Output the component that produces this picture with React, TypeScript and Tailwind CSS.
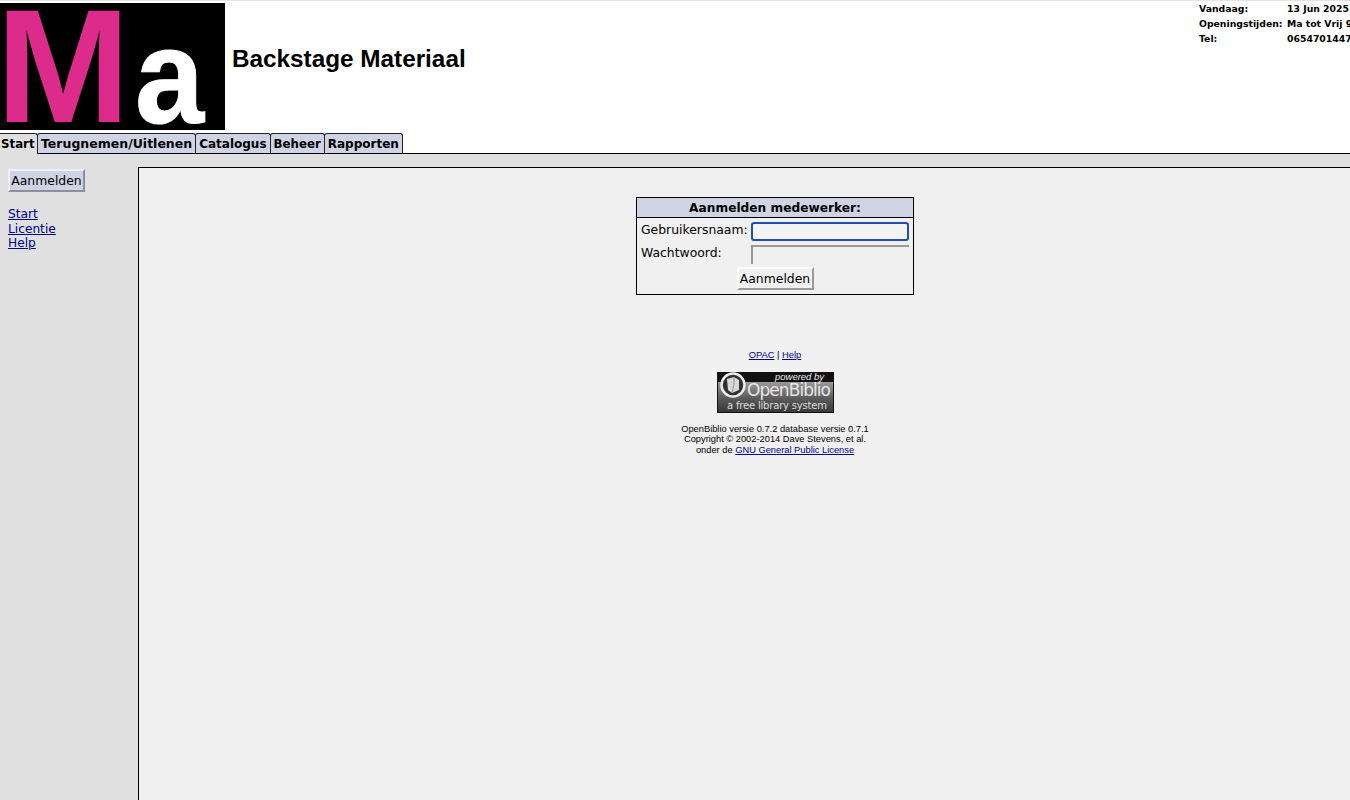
const sans = "font-['DejaVu_Sans',sans-serif]"

const tabs = [
  { name: 'Terugnemen/Uitlenen', size: 'text-[12.5px]' },
  { name: 'Catalogus', size: 'text-[12px]' },
  { name: 'Beheer', size: 'text-[11.8px]' },
  { name: 'Rapporten', size: 'text-[12px]' },
]

function Logo() {
  return (
    <div className="flex h-[127px] w-[225px] shrink-0 overflow-hidden bg-black font-['Liberation_Sans',sans-serif] font-bold">
      <span className="ml-[-4px] mt-[-14px] h-[155px] text-[161px] leading-[155px] text-[#dc2b8b]">M</span>
      <span className="ml-[5px] mt-[-4px] h-[155px] origin-left scale-x-[0.92] text-[135px] leading-[155px] text-white [-webkit-text-stroke:1px_white]">a</span>
    </div>
  )
}

function Badge() {
  return (
    <svg width="117" height="41" viewBox="0 0 117 41" className="block">
      <defs>
        <linearGradient id="band" x1="0" y1="0" x2="0" y2="1">
          <stop offset="0" stopColor="#9a9a9a" />
          <stop offset="0.55" stopColor="#5a5a5a" />
          <stop offset="1" stopColor="#3a3a3a" />
        </linearGradient>
      </defs>
      <rect width="117" height="41" fill="#111" />
      <rect x="1" y="10" width="115" height="30" fill="url(#band)" />
      <circle cx="16" cy="13" r="11.5" fill="#333" stroke="#ececec" strokeWidth="2.5" />
      <path d="M10 7 L17 5 L22 8 L22 18 L15 21 L11 18 Z" fill="#d8d8d8" />
      <path d="M17 5 L17 12 L15 21" fill="none" stroke="#777" strokeWidth="0.7" />
      <text x="58" y="8" fontSize="9.5" fontStyle="italic" fontFamily="Liberation Sans" fill="#eee" textLength="49">powered by</text>
      <text x="30" y="24" fontSize="17" fontFamily="DejaVu Sans" fill="#e6e6e6" textLength="84">OpenBiblio</text>
      <text x="10" y="37" fontSize="10" fontFamily="DejaVu Sans" fill="#ddd" textLength="100">a free library system</text>
    </svg>
  )
}

export default function App() {
  return (
    <div className="h-[800px] w-[1350px] overflow-hidden bg-white">
      {/* the page is wider than the window, so the right side is clipped */}
      <div className={`flex h-[800px] w-[1411px] flex-col text-black ${sans}`}>
        {/* header */}
        <div className="flex h-[133px] border-t border-[#e4e4e4] pt-[2px]">
          <Logo />
          <h1 className="ml-[7px] mt-[41px] font-['Liberation_Sans',sans-serif] text-[24.3px] font-bold leading-[30px]">Backstage Materiaal</h1>
          <table className="ml-auto mt-[-2px] h-fit w-[212px] shrink-0 border-collapse text-[9.3px] font-bold leading-[15px]">
            <tbody>
              <tr><td className="w-[88px] whitespace-nowrap">Vandaag:</td><td className="whitespace-nowrap">13 Jun 2025</td></tr>
              <tr><td className="whitespace-nowrap">Openingstijden:</td><td className="whitespace-nowrap">Ma tot Vrij 9</td></tr>
              <tr><td className="whitespace-nowrap">Tel:</td><td className="whitespace-nowrap">0654701447</td></tr>
            </tbody>
          </table>
        </div>

        {/* tabs */}
        <div className="flex h-[21px] items-stretch border-b border-black font-bold leading-[20px]">
          <div className="mb-[-1px] w-[38px] whitespace-nowrap rounded-tr-[3px] border-r border-t border-[#222] bg-[#e0e0e0] pb-[1px] pl-[1px] text-[11.8px]">Start</div>
          {tabs.map((t) => (
            <div key={t.name} className={`ml-[-1px] whitespace-nowrap rounded-t-[3px] border border-b-0 border-[#222] bg-[#cfd3e4] px-[3px] ${t.size}`}>{t.name}</div>
          ))}
        </div>

        {/* body */}
        <div className="flex flex-1 bg-[#e0e0e0]">
          <div className="w-[138px] shrink-0 pl-[8px] pt-[15px] text-[12.2px]">
            <button className="h-[23px] w-[77px] border-2 border-b-[#8e8e9e] border-l-[#eef0f6] border-r-[#8e8e9e] border-t-[#eef0f6] bg-[#cfd3e4] text-[12.4px] leading-[18px]">Aanmelden</button>
            <div className="mt-[15px] flex flex-col items-start leading-[14.6px] text-[#00008b]">
              <a className="underline">Start</a>
              <a className="underline">Licentie</a>
              <a className="underline">Help</a>
            </div>
          </div>

          <div className="mt-[13px] flex flex-1 flex-col items-center border-l border-t border-black bg-[#f0f0f0] pt-[29px]">
            <div className="w-[278px] border border-black text-[12.4px]">
              <div className="h-[20px] border-b border-black bg-[#cfd3e4] text-center text-[12.2px] font-bold leading-[20px]">Aanmelden medewerker:</div>
              <div className="flex h-[24px] items-center pl-[4px] pt-[3px]">
                <span className="mt-[-2px] w-[110px]">Gebruikersnaam:</span>
                <div className="h-[19px] w-[158px] rounded-[3px] border-2 border-[#1f4fa8] bg-[#f4f4f4]" />
              </div>
              <div className="flex h-[23px] items-center pl-[4px] pt-[2px]">
                <span className="mt-[-2px] w-[110px]">Wachtwoord:</span>
                <div className="h-[19px] w-[158px] border-l-2 border-t-2 border-[#9a9a9a]" />
              </div>
              <div className="flex justify-center pb-[4px] pt-[2px]">
                <button className="h-[23px] w-[77px] border-2 border-b-[#9a9a9a] border-l-[#fbfbfb] border-r-[#9a9a9a] border-t-[#fbfbfb] bg-[#f0f0f0] text-[12.4px] leading-[18px]">Aanmelden</button>
              </div>
            </div>

            <div className="mt-[55px] flex flex-col items-center font-['Liberation_Sans',sans-serif] text-[9.3px] leading-[10.7px]">
              <div><a className="text-[#00008b] underline">OPAC</a> | <a className="text-[#00008b] underline">Help</a></div>
              <div className="mb-[11px] ml-[1px] mt-[11px]"><Badge /></div>
              <div>OpenBiblio versie 0.7.2 database versie 0.7.1</div>
              <div>Copyright © 2002-2014 Dave Stevens, et al.</div>
              <div>onder de <a className="text-[#00008b] underline">GNU General Public License</a></div>
            </div>
          </div>
        </div>
      </div>
    </div>
  )
}
